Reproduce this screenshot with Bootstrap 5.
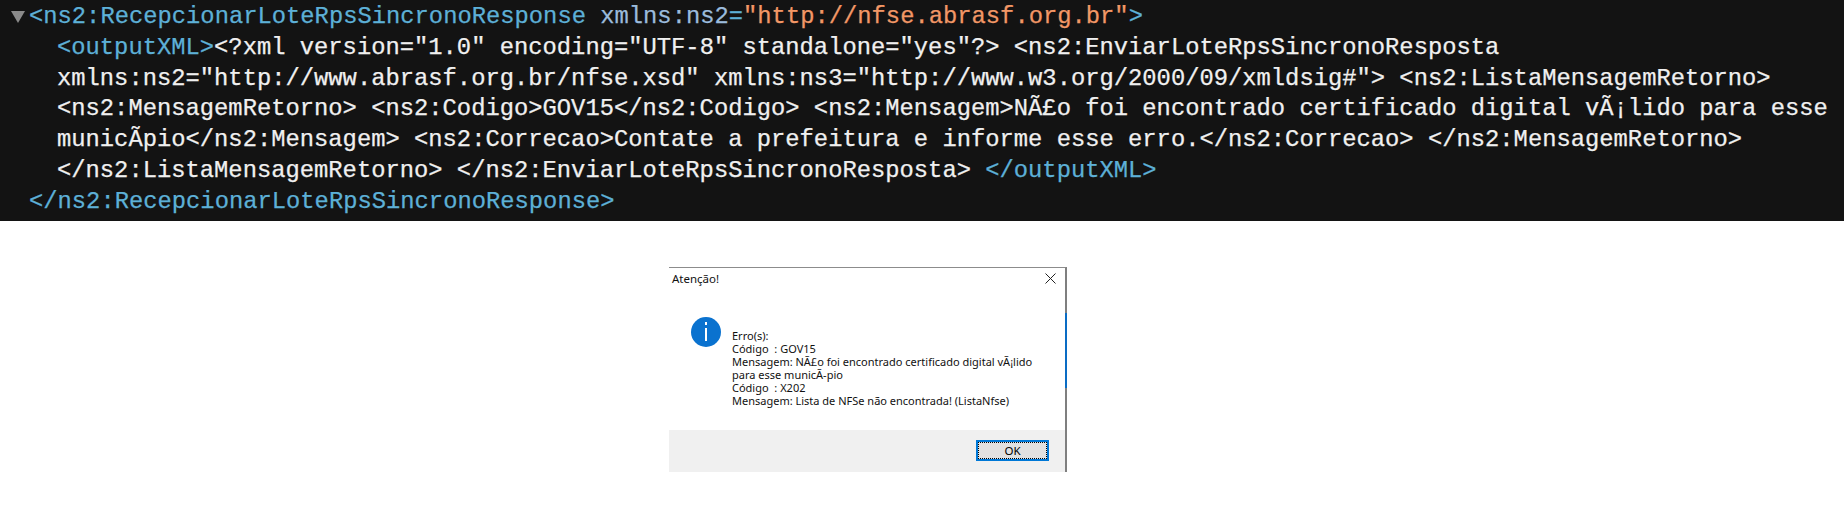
<!DOCTYPE html>
<html lang="pt">
<head>
<meta charset="utf-8">
<title>Atenção</title>
<link href="https://cdn.jsdelivr.net/npm/bootstrap@5.3.0/dist/css/bootstrap.min.css" rel="stylesheet">
<style>
html,body{background:#fff;margin:0;height:514px;overflow:hidden}
.xml-pane{background:#131313;height:221px;padding-top:2px;font-family:"Liberation Mono",monospace;font-size:23.8px;line-height:30.8px;color:#f0f0f0;overflow:hidden;-webkit-text-stroke:.25px}
.xml-row{height:30.8px;white-space:pre}
.xml-top{padding-left:29px;position:relative}
.xml-in{padding-left:57px}
.xml-close{padding-left:29px}
.xml-tag{color:#5db0d7}
.xml-attr{color:#9bbbdc}
.xml-val{color:#f29766}
.xml-caret{position:absolute;left:11px;top:9px;width:0;height:0;border-left:7px solid transparent;border-right:7px solid transparent;border-top:12px solid #8a8a8a}
.msg-box{width:398px;height:205px;margin:46px 0 0 669px;background:#fff;border-top:1px solid #8c8c8c;border-right:2px solid #7f7f7f;font-family:"Noto Sans",sans-serif;font-size:11px;line-height:13px;color:#111;position:relative}
.msg-edge{position:absolute;right:-2px;top:45px;width:2px;height:75px;background:#0a6cc4}
.msg-title{height:23px;padding:4px 0 0 3px;font-size:11.5px;line-height:14px}
.msg-x{margin:1px 9px 0 0}
.msg-body{height:139px;padding:26px 0 0 22px}
.msg-icon{width:30px;height:30px;flex:none}
.msg-text{width:320px;margin:12px 0 0 11px}
.msg-foot{height:42px;background:#f0f0f0;padding:10px 16px 0 0}
.msg-btn{width:73px;height:21px;background:#e1e1e1;border:2px solid #0078d7;outline:1px dotted #000;outline-offset:-3px;font-size:11.5px;line-height:15px;color:#000;padding:0;border-radius:0;text-align:center}
</style>
</head>
<body>
<div class="xml-pane">
<div class="xml-row xml-top"><span class="xml-caret"></span><span class="xml-tag">&lt;ns2:RecepcionarLoteRpsSincronoResponse</span> <span class="xml-attr">xmlns:ns2</span><span class="xml-tag">=</span><span class="xml-val">"http://nfse.abrasf.org.br"</span><span class="xml-tag">&gt;</span></div>
<div class="xml-row xml-in"><span class="xml-tag">&lt;outputXML&gt;</span>&lt;?xml version="1.0" encoding="UTF-8" standalone="yes"?&gt; &lt;ns2:EnviarLoteRpsSincronoResposta</div>
<div class="xml-row xml-in">xmlns:ns2="http://www.abrasf.org.br/nfse.xsd" xmlns:ns3="http://www.w3.org/2000/09/xmldsig#"&gt; &lt;ns2:ListaMensagemRetorno&gt;</div>
<div class="xml-row xml-in">&lt;ns2:MensagemRetorno&gt; &lt;ns2:Codigo&gt;GOV15&lt;/ns2:Codigo&gt; &lt;ns2:Mensagem&gt;NÃ£o foi encontrado certificado digital vÃ¡lido para esse</div>
<div class="xml-row xml-in">municÃpio&lt;/ns2:Mensagem&gt; &lt;ns2:Correcao&gt;Contate a prefeitura e informe esse erro.&lt;/ns2:Correcao&gt; &lt;/ns2:MensagemRetorno&gt;</div>
<div class="xml-row xml-in">&lt;/ns2:ListaMensagemRetorno&gt; &lt;/ns2:EnviarLoteRpsSincronoResposta&gt; <span class="xml-tag">&lt;/outputXML&gt;</span></div>
<div class="xml-row xml-close"><span class="xml-tag">&lt;/ns2:RecepcionarLoteRpsSincronoResponse&gt;</span></div>
</div>

<div class="msg-box">
  <span class="msg-edge"></span>
  <div class="msg-title d-flex justify-content-between">
    <span>Atenção!</span>
    <svg class="msg-x" width="11" height="11" viewBox="0 0 11 11"><path d="M.5.5l10 10M10.5.5l-10 10" stroke="#222" stroke-width="1" fill="none"/></svg>
  </div>
  <div class="msg-body d-flex align-items-start">
    <svg class="msg-icon" viewBox="0 0 30 30"><circle cx="15" cy="15" r="15" fill="#0a72cf"/><rect x="14" y="5" width="2" height="3" fill="#fff"/><rect x="14" y="11" width="2" height="13" fill="#fff"/></svg>
    <div class="msg-text">Erro(s):<br>Código&nbsp; : GOV15<br>Mensagem: NÃ£o foi encontrado certificado digital vÃ¡lido<br>para esse municÃ-pio<br>Código&nbsp; : X202<br>Mensagem: Lista de NFSe não encontrada! (ListaNfse)</div>
  </div>
  <div class="msg-foot d-flex justify-content-end"><button type="button" class="btn msg-btn">OK</button></div>
</div>
<script src="https://cdn.jsdelivr.net/npm/bootstrap@5.3.0/dist/js/bootstrap.bundle.min.js"></script>
</body>
</html>
